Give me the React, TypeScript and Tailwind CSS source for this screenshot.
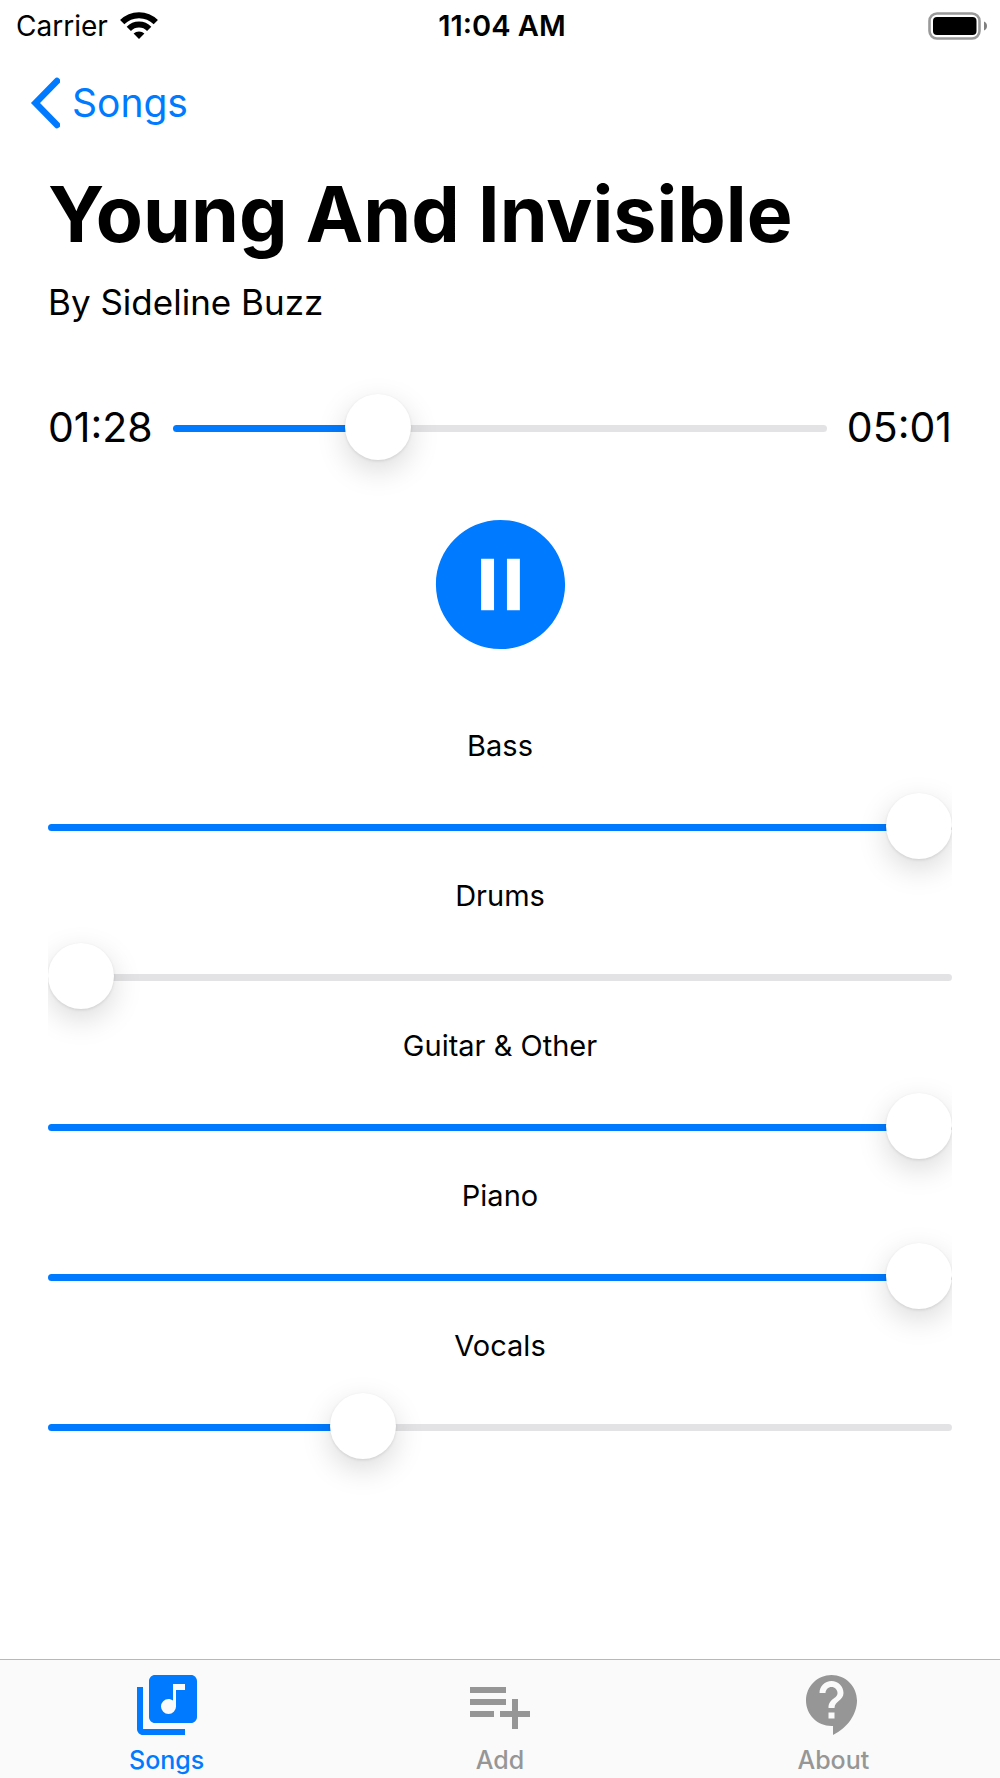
import { useState } from "react";
import { MdContactSupport, MdLibraryMusic, MdPauseCircleFilled, MdPlayCircleFilled } from "react-icons/md";

const DURATION = 301;

const STEMS = [
  { name: "Bass", volume: 1 },
  { name: "Drums", volume: 0 },
  { name: "Guitar & Other", volume: 1 },
  { name: "Piano", volume: 1 },
  { name: "Vocals", volume: 0.337 },
];

const TABS = [
  { label: "Songs", href: "#songs", icon: MdLibraryMusic, active: true },
  { label: "Add", href: "#add", icon: PlaylistAddIcon, active: false },
  { label: "About", href: "#about", icon: MdContactSupport, active: false },
];

function PlaylistAddIcon({ className }: { className?: string }) {
  return (
    <svg viewBox="0 0 24 24" fill="currentColor" className={className}>
      <path d="M14 10H2v2h12v-2zm0-4H2v2h12V6zm4 8v-4h-2v4h-4v2h4v4h2v-4h4v-2h-4zM2 16h8v-2H2v2z" />
    </svg>
  );
}

function formatTime(seconds: number) {
  const m = String(Math.floor(seconds / 60)).padStart(2, "0");
  const s = String(seconds % 60).padStart(2, "0");
  return `${m}:${s}`;
}

type SliderProps = {
  id: string;
  label?: string;
  value: number;
  max: number;
  step: number;
  onChange: (value: number) => void;
};

function Slider({ id, label, value, max, step, onChange }: SliderProps) {
  const filled = (value / max) * 100;

  return (
    <input
      id={id}
      type="range"
      aria-label={label}
      min={0}
      max={max}
      step={step}
      value={value}
      onChange={(e) => onChange(Number(e.target.value))}
      style={{ "--track": `linear-gradient(to right, #007aff ${filled}%, #e3e3e5 ${filled}%)` } as React.CSSProperties}
      className="block h-[66px] w-full cursor-pointer appearance-none bg-transparent outline-none [&::-webkit-slider-runnable-track]:h-[7px] [&::-webkit-slider-runnable-track]:rounded-full [&::-webkit-slider-runnable-track]:bg-(image:--track) [&::-webkit-slider-thumb]:-mt-[31px] [&::-webkit-slider-thumb]:size-[66px] [&::-webkit-slider-thumb]:appearance-none [&::-webkit-slider-thumb]:rounded-full [&::-webkit-slider-thumb]:bg-white [&::-webkit-slider-thumb]:shadow-[0_10px_30px_rgba(0,0,0,0.15),0_1px_3px_rgba(0,0,0,0.1)]"
    />
  );
}

function StatusBar() {
  return (
    <div className="grid h-[52px] grid-cols-3 items-center pr-3 pl-4">
      <div className="flex items-center gap-3 text-[28px]">
        Carrier
        <svg viewBox="0 0 38 28" className="h-7 w-[38px]" fill="none" stroke="#000" strokeWidth="6">
          <path d="M2.2 10.2A23.7 23.7 0 0 1 35.8 10.2" />
          <path d="M8.8 16.8A14.4 14.4 0 0 1 29.2 16.8" />
          <path d="M19 27L13.6 21.6A7.7 7.7 0 0 1 24.4 21.6Z" fill="#000" stroke="none" />
        </svg>
      </div>
      <div className="text-center text-[29px] font-semibold">11:04 AM</div>
      <svg viewBox="0 0 60 28" className="h-7 w-[60px] justify-self-end">
        <rect x="1.5" y="1.5" width="50" height="25" rx="7.5" fill="none" stroke="#999" strokeWidth="2.6" />
        <rect x="5" y="5" width="43.5" height="18" rx="4" fill="#000" />
        <path d="M56 9.5C60 11 60 17 56 18.5Z" fill="#808080" />
      </svg>
    </div>
  );
}

export default function App() {
  const [position, setPosition] = useState(88);
  const [playing, setPlaying] = useState(true);
  const [volumes, setVolumes] = useState(STEMS.map((stem) => stem.volume));

  function changeVolume(index: number, value: number) {
    setVolumes((prev) => prev.map((v, i) => (i === index ? value : v)));
  }

  return (
    <div className="flex min-h-screen flex-col bg-white font-['Inter',sans-serif] text-black">
      <StatusBar />

      <nav className="flex h-[102px] items-center px-[30px]">
        <a href="#songs" className="flex items-center gap-3 text-[39px] text-[#007aff]">
          <svg viewBox="0 0 30 52" className="h-[52px] w-[30px]" fill="none" stroke="currentColor" strokeWidth="6.5" strokeLinecap="round">
            <path d="M27 4L5.5 26L27 48" />
          </svg>
          Songs
        </a>
      </nav>

      <main className="px-12 pt-3 pb-16">
        <h1 className="text-[77px] leading-[96px] font-bold">Young And Invisible</h1>
        <p className="mt-[18px] text-[35px] leading-[44px]">By Sideline Buzz</p>

        <div className="mt-[71px] flex items-center gap-5 text-[41px]">
          <span>{formatTime(position)}</span>
          <div className="flex-1">
            <Slider id="position" label="Position" value={position} max={DURATION} step={1} onChange={setPosition} />
          </div>
          <span>{formatTime(DURATION)}</span>
        </div>

        <div className="mt-[46px] flex justify-center">
          <button type="button" aria-label={playing ? "Pause" : "Play"} onClick={() => setPlaying(!playing)} className="text-[#007aff]">
            {playing ? <MdPauseCircleFilled className="size-[155px]" /> : <MdPlayCircleFilled className="size-[155px]" />}
          </button>
        </div>

        <div className="mt-16 flex flex-col gap-4">
          {STEMS.map((stem, i) => (
            <div key={stem.name} className="flex flex-col gap-7">
              <label htmlFor={`stem-${i}`} className="text-center text-[29px] leading-10">
                {stem.name}
              </label>
              {/* thumb shadows stop at the ends of the track */}
              <div className="overflow-x-clip">
                <Slider id={`stem-${i}`} value={volumes[i]} max={1} step={0.001} onChange={(value) => changeVolume(i, value)} />
              </div>
            </div>
          ))}
        </div>
      </main>

      <nav className="mt-auto grid h-[119px] grid-cols-3 border-t border-[#b8b8b8] bg-[#fafafa]">
        {TABS.map(({ label, href, icon: Icon, active }) => (
          <a
            key={label}
            href={href}
            className={`flex flex-col items-center pt-[9px] text-[25px] leading-[38px] font-medium ${active ? "text-[#007aff]" : "text-[#969696]"}`}
          >
            <Icon className="size-[72px]" />
            {label}
          </a>
        ))}
      </nav>
    </div>
  );
}
